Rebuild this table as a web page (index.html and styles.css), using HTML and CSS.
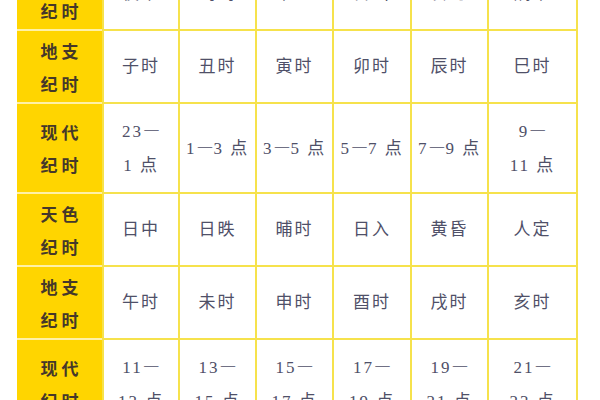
FILE: index.html
```html
<!DOCTYPE html>
<html lang="zh">
<head>
<meta charset="utf-8">
<link rel="stylesheet" href="styles.css">
</head>
<body>
<table class="times">
  <colgroup>
    <col class="c-head">
    <col class="c1"><col class="c2"><col class="c3"><col class="c4"><col class="c5"><col class="c6">
  </colgroup>
  <tr class="r-short">
    <th>天色<br>纪时</th>
    <td>夜半</td><td>鸡鸣</td><td>平旦</td><td>日出</td><td>食时</td><td>隅中</td>
  </tr>
  <tr class="r-short">
    <th>地支<br>纪时</th>
    <td>子时</td><td>丑时</td><td>寅时</td><td>卯时</td><td>辰时</td><td>巳时</td>
  </tr>
  <tr class="r-tall">
    <th>现代<br>纪时</th>
    <td>23<span class="dash">—</span><br>1 点</td>
    <td>1<span class="dash">—</span>3 点</td>
    <td>3<span class="dash">—</span>5 点</td>
    <td>5<span class="dash">—</span>7 点</td>
    <td>7<span class="dash">—</span>9 点</td>
    <td>9<span class="dash">—</span><br>11 点</td>
  </tr>
  <tr class="r-short">
    <th>天色<br>纪时</th>
    <td>日中</td><td>日昳</td><td>晡时</td><td>日入</td><td>黄昏</td><td>人定</td>
  </tr>
  <tr class="r-short">
    <th>地支<br>纪时</th>
    <td>午时</td><td>未时</td><td>申时</td><td>酉时</td><td>戌时</td><td>亥时</td>
  </tr>
  <tr class="r-tall">
    <th>现代<br>纪时</th>
    <td>11<span class="dash">—</span><br>13 点</td>
    <td>13<span class="dash">—</span><br>15 点</td>
    <td>15<span class="dash">—</span><br>17 点</td>
    <td>17<span class="dash">—</span><br>19 点</td>
    <td>19<span class="dash">—</span><br>21 点</td>
    <td>21<span class="dash">—</span><br>23 点</td>
  </tr>
</table>
</body>
</html>
```

FILE: styles.css
```css
html, body {
  margin: 0;
  padding: 0;
  background: #ffffff;
  overflow: hidden;
}

.times {
  margin: -42px 0 0 17px;
  border-collapse: separate;
  border-spacing: 0;
  table-layout: fixed;
  width: 561px;
}

.c-head { width: 85px; }
.c1 { width: 76px; }
.c2 { width: 77px; }
.c3 { width: 77px; }
.c4 { width: 78px; }
.c5 { width: 77px; }
.c6 { width: 91px; }

.r-short { height: 73px; }
.r-tall { height: 90px; }

.times th,
.times td {
  padding: 0;
  text-align: center;
  vertical-align: middle;
  box-sizing: border-box;
}

.times th {
  background: #ffd500;
  color: #45382a;
  font-family: "Noto Sans CJK SC", sans-serif;
  font-weight: 700;
  font-size: 17px;
  line-height: 33px;
  letter-spacing: 4px;
  padding-left: 4px;
  border-bottom: 2px solid #fff1a6;
}

.times td {
  color: #4f5068;
  font-family: "Liberation Serif", "Noto Sans CJK SC", serif;
  font-size: 17px;
  line-height: 34px;
  letter-spacing: 2px;
  border-left: 2px solid #f6e24c;
  border-bottom: 2px solid #f6e24c;
}

.times td:last-child {
  border-right: 2px solid #f6e24c;
}

.dash {
  font-family: "Noto Sans CJK SC", sans-serif;
  font-weight: 700;
  letter-spacing: 0;
}
```
